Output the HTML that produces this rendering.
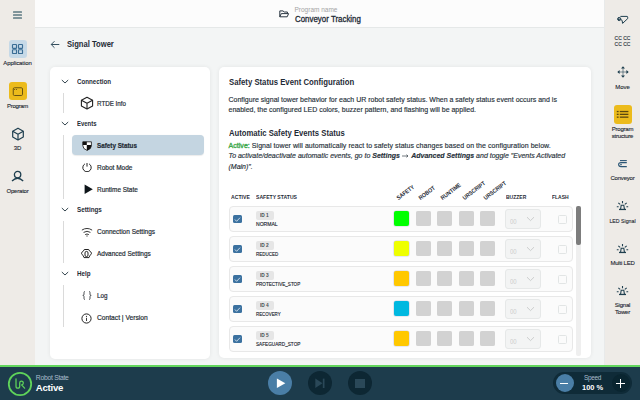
<!DOCTYPE html>
<html><head><meta charset="utf-8">
<style>
*{box-sizing:border-box;margin:0;padding:0}
html,body{width:640px;height:400px;overflow:hidden}
body{position:relative;background:#f3f5f5;font-family:"Liberation Sans",sans-serif;color:#1f2b36}
.a{position:absolute}
.t{position:absolute;white-space:nowrap;line-height:1}
.sb{position:absolute;top:0;width:35px;height:365px;background:#eeebe7}
.lbl{position:absolute;width:35px;text-align:center;font-size:6px;line-height:1;color:#1c2731;-webkit-text-stroke:0.12px #1c2731;white-space:nowrap}
.card{position:absolute;background:#fff;border-radius:5px;box-shadow:0 0 4px rgba(0,0,0,0.07)}
.hd{position:absolute;transform-origin:0 0;left:77px;font-size:7px;font-weight:bold;line-height:1;color:#1f2b36;white-space:nowrap}
.it{position:absolute;transform-origin:0 0;left:97.3px;font-size:7px;line-height:1;color:#252d35;white-space:nowrap;-webkit-text-stroke:0.2px #252d35}
.vl{position:absolute;left:63px;width:1px;background:#dadada}
.chev{position:absolute;left:61px}
.ic{position:absolute}
.row{position:absolute;left:228.5px;width:344px;height:25.5px;border:1px solid #e8e8e8;border-radius:4px;background:#fbfbfb}
.cb{position:absolute;left:3.7px;top:7.7px;width:8.6px;height:8.6px;border-radius:1.5px;background:#3c72a0}
.cb svg{position:absolute;left:0;top:0}
.idb{position:absolute;left:26.5px;top:4px;width:17.5px;height:9px;border-radius:2px;background:#e6e6e6}
.idb span{position:absolute;left:3.5px;top:2px;font-size:5.2px;font-weight:bold;line-height:1;color:#4a4f54;white-space:nowrap;transform:scaleX(0.92);transform-origin:0 0}
.nm{position:absolute;left:26.3px;top:15.2px;font-size:5.7px;line-height:1;color:#1a242e;-webkit-text-stroke:0.15px #1a242e;white-space:nowrap;transform:scaleX(0.86);transform-origin:0 0}
.sq{position:absolute;top:4.1px;width:15px;height:15px;border-radius:2px;background:#d2d2d2;box-shadow:0 0 0.6px rgba(0,0,0,0.12)}
.sq.c{box-shadow:0 0 0 0.6px #d6d6e4}
.sel{position:absolute;left:275.5px;top:2px;width:35.5px;height:19.5px;border:1px solid #e6e8e8;border-radius:3px;background:#f3f4f4}
.sel span{position:absolute;left:3.6px;top:9.2px;font-size:6.6px;line-height:1;color:#cdcdcd;transform:scaleX(0.9);transform-origin:0 0}
.sel svg{position:absolute;left:20.4px;top:5.7px}
.fl{position:absolute;left:328.8px;top:7.5px;width:8.6px;height:9px;border:1px solid #e2e5e5;border-radius:1.5px;background:#fbfbfb}
.th{position:absolute;transform-origin:0 0;top:194.3px;font-size:6px;font-weight:bold;line-height:1;color:#1f2b36;white-space:nowrap}
.rh{position:absolute;font-size:6px;font-weight:bold;line-height:1;color:#1f2b36;white-space:nowrap;transform-origin:0 100%;transform:rotate(-37deg) scaleX(0.87)}
</style></head><body>

<!-- left sidebar -->
<div class="sb" style="left:0">
  <div class="a" style="left:13px;top:11px;width:9px;height:2px;background:#80959b;border-radius:0.5px"></div>
  <div class="a" style="left:13px;top:14px;width:9px;height:2px;background:#80959b;border-radius:0.5px"></div>
  <div class="a" style="left:13px;top:17px;width:9px;height:2px;background:#80959b;border-radius:0.5px"></div>

  <div class="a" style="left:8.5px;top:40px;width:18px;height:18px;border-radius:3px;background:#c6d9e7"></div>
  <svg class="a" style="left:11px;top:43px" width="13" height="13" viewBox="0 0 13 13">
    <g fill="none" stroke="#3a6d95" stroke-width="1.15">
      <rect x="1.5" y="1.5" width="4" height="3.8" rx="0.6"/><rect x="7.5" y="1.5" width="4" height="3.8" rx="0.6"/>
      <rect x="1.5" y="6.7" width="4" height="3.8" rx="0.6"/><rect x="7.5" y="6.7" width="4" height="3.8" rx="0.6"/>
    </g>
  </svg>
  <div class="lbl" style="left:0;top:60px;letter-spacing:-0.1px">Application</div>

  <div class="a" style="left:8.5px;top:82px;width:18px;height:18px;border-radius:3px;background:#ecbb1c"></div>
  <svg class="a" style="left:11px;top:85px" width="13" height="13" viewBox="0 0 13 13">
    <rect x="2.25" y="2.75" width="9.25" height="7.75" rx="1.2" fill="none" stroke="#6a5412" stroke-width="1"/>
    <circle cx="3.6" cy="4.5" r="0.6" fill="#6a5412"/><circle cx="5.5" cy="4.5" r="0.6" fill="#6a5412"/>
  </svg>
  <div class="lbl" style="left:0;top:103px;letter-spacing:-0.3px">Program</div>

  <svg class="a" style="left:11px;top:127px" width="14" height="14" viewBox="0 0 14 14">
    <g fill="none" stroke="#1f3f4f" stroke-width="1.2" stroke-linejoin="round">
      <path d="M7 1.2 L12.3 4.2 V10 L7 13 L1.7 10 V4.2 Z"/><path d="M1.7 4.2 L7 7.2 L12.3 4.2 M7 7.2 V13"/>
    </g>
  </svg>
  <div class="lbl" style="left:0;top:145px">3D</div>

  <svg class="a" style="left:11px;top:170px" width="13" height="13" viewBox="0 0 13 13">
    <g fill="none" stroke="#1f3f4f" stroke-width="1.3">
      <circle cx="6.6" cy="4.6" r="3.2"/><path d="M1 11 Q6.6 5.4 12.2 11"/>
    </g>
  </svg>
  <div class="lbl" style="left:0;top:188px;letter-spacing:-0.2px">Operator</div>
</div>

<!-- header -->
<div class="a" style="left:35px;top:0;width:570px;height:28px;background:#fcfcfc;border-bottom:1px solid #e5e8e8"></div>
<svg class="a" style="left:279px;top:9.5px" width="11" height="9" viewBox="0 0 11 9">
  <path d="M0.8 0.9 H4 L5.2 2 H8.4 V3.6 M0.8 0.9 V6.8 H8.2 L9.6 3.6 H2.3 L0.8 6.8" fill="none" stroke="#2a3540" stroke-width="1" stroke-linejoin="round"/>
</svg>
<div class="t" style="left:294.5px;top:6.6px;font-size:6.5px;color:#a4a4a4">Program name</div>
<div class="t" style="left:294.5px;top:14.5px;font-size:8.5px;color:#1f2b36;-webkit-text-stroke:0.3px #1f2b36;transform:scaleX(0.93);transform-origin:0 0">Conveyor Tracking</div>

<!-- right sidebar -->
<div class="sb" style="left:605px"></div>
<div class="a" style="left:604px;top:0;width:1px;height:365px;background:#e8eaea"></div>

<!-- title -->
<svg class="a" style="left:50px;top:40px" width="10" height="9" viewBox="0 0 10 9">
  <path d="M9.3 4.5 H1.2 M4.5 1.2 L1.2 4.5 L4.5 7.8" fill="none" stroke="#35505f" stroke-width="1"/>
</svg>
<div class="t" style="left:67px;top:39.5px;font-size:8.5px;font-weight:bold;color:#1f2b36;transform:scaleX(0.896);transform-origin:0 0">Signal Tower</div>

<!-- left card -->
<div class="card" style="left:49.5px;top:66.5px;width:160px;height:292px"></div>
<svg class="chev" style="top:79px" width="8" height="5" viewBox="0 0 8 5"><path d="M0.8 1 L4 4 L7.2 1" fill="none" stroke="#34454f" stroke-width="1"/></svg>
<div class="hd" style="top:78px;transform:scaleX(0.883)">Connection</div>
<div class="vl" style="top:93px;height:20px"></div>
<div class="it" style="top:99.8px;transform:scaleX(0.89)">RTDE Info</div>

<svg class="chev" style="top:121px" width="8" height="5" viewBox="0 0 8 5"><path d="M0.8 1 L4 4 L7.2 1" fill="none" stroke="#34454f" stroke-width="1"/></svg>
<div class="hd" style="top:120px;transform:scaleX(0.85)">Events</div>
<div class="vl" style="top:135px;height:64px"></div>
<div class="a" style="left:72.2px;top:135.2px;width:132.3px;height:19.6px;border-radius:4px;background:#c4d5e1;box-shadow:0 0.6px 1px rgba(0,0,0,0.08)"></div>
<div class="it" style="top:142px;font-weight:bold;color:#1f2b36;transform:scaleX(0.9)">Safety Status</div>
<div class="it" style="top:164px;transform:scaleX(0.93)">Robot Mode</div>
<div class="it" style="top:186px;transform:scaleX(0.92)">Runtime State</div>

<svg class="chev" style="top:207px" width="8" height="5" viewBox="0 0 8 5"><path d="M0.8 1 L4 4 L7.2 1" fill="none" stroke="#34454f" stroke-width="1"/></svg>
<div class="hd" style="top:206px;transform:scaleX(0.9)">Settings</div>
<div class="vl" style="top:221px;height:42px"></div>
<div class="it" style="top:228px;transform:scaleX(0.927)">Connection Settings</div>
<div class="it" style="top:250px;transform:scaleX(0.921)">Advanced Settings</div>

<svg class="chev" style="top:271px" width="8" height="5" viewBox="0 0 8 5"><path d="M0.8 1 L4 4 L7.2 1" fill="none" stroke="#34454f" stroke-width="1"/></svg>
<div class="hd" style="top:270px;transform:scaleX(0.89)">Help</div>
<div class="vl" style="top:285px;height:42px"></div>
<div class="it" style="top:292px;transform:scaleX(0.9)">Log</div>
<div class="it" style="top:314px;transform:scaleX(0.953)">Contact | Version</div>

<!-- tree icons -->
<svg class="ic" style="left:80px;top:96px" width="14" height="14" viewBox="0 0 14 14">
  <g fill="none" stroke="#222" stroke-width="1.1" stroke-linejoin="round">
    <path d="M7 1.2 L12.6 4.2 V10 L7 13 L1.4 10 V4.2 Z"/><path d="M1.4 4.2 L7 7.2 L12.6 4.2 M7 7.2 V13"/>
  </g>
</svg>
<svg class="ic" style="left:82px;top:140.5px" width="10" height="10" viewBox="0 0 10 10">
  <path d="M0.8 0.8 H9.4 V4.6 Q9.4 8 5.1 9.4 Q0.8 8 0.8 4.6 Z" fill="#fff" stroke="#111" stroke-width="0.8"/>
  <path d="M0.8 0.8 H4.8 V4.1 H0.8 Z M4.8 4.1 H9.4 V4.6 Q9.4 8 5.1 9.4 H4.8 Z" fill="#111"/>
</svg>
<svg class="ic" style="left:82px;top:162px" width="10" height="10" viewBox="0 0 10 10">
  <g fill="none" stroke="#222" stroke-width="1">
    <path d="M2.9 1.9 A4.2 4.2 0 1 0 7.1 1.9"/><path d="M5 1 V4.6"/>
  </g>
</svg>
<svg class="ic" style="left:83.5px;top:184px" width="10" height="11" viewBox="0 0 10 11">
  <path d="M0.6 0.5 L8.8 5.2 L0.6 9.9 Z" fill="#0d1419"/>
</svg>
<svg class="ic" style="left:81px;top:226.5px" width="12" height="10" viewBox="0 0 12 10">
  <g fill="none" stroke="#222" stroke-width="0.9" stroke-linecap="round">
    <path d="M1.2 2.9 Q6 -0.2 10.8 2.9"/><path d="M2.9 5.2 Q6 3.1 9.1 5.2"/><path d="M4.5 7.4 Q6 6.4 7.5 7.4"/>
  </g>
  <circle cx="6" cy="9" r="0.7" fill="#555"/>
</svg>
<svg class="ic" style="left:81px;top:248px" width="11" height="11" viewBox="0 0 11 11">
  <g fill="none" stroke="#222" stroke-width="1">
    <path d="M3.3 1.5 H7.7 L8.6 3.1 L10.2 4.3 Q10.7 5.3 10.2 6.3 L8.8 7.5 L8 9.6 H3 L2.2 7.5 L0.8 6.3 Q0.3 5.3 0.8 4.3 L2.4 3.1 Z"/>
    <rect x="4" y="3.4" width="3" height="5.2" rx="1.5"/>
  </g>
</svg>
<svg class="ic" style="left:82px;top:291px" width="10" height="9" viewBox="0 0 10 9">
  <g fill="none" stroke="#3a3f44" stroke-width="0.9">
    <path d="M3 0.5 Q2 0.5 2 1.5 V3.3 Q2 4.3 0.8 4.4 Q2 4.5 2 5.5 V7.5 Q2 8.5 3 8.5"/>
    <path d="M7 0.5 Q8 0.5 8 1.5 V3.3 Q8 4.3 9.2 4.4 Q8 4.5 8 5.5 V7.5 Q8 8.5 7 8.5"/>
  </g>
</svg>
<svg class="ic" style="left:81px;top:312.5px" width="11" height="11" viewBox="0 0 11 11">
  <g fill="none" stroke="#222" stroke-width="1">
    <circle cx="5.5" cy="5.5" r="4.6"/><path d="M5.5 4.8 V8" stroke-width="0.9"/>
  </g>
  <circle cx="5.5" cy="3.3" r="0.6" fill="#222"/>
</svg>

<!-- right sidebar icons -->
<svg class="ic" style="left:616px;top:15px" width="13" height="10" viewBox="0 0 13 10">
  <g fill="none" stroke="#1f3f4f" stroke-width="1" stroke-linejoin="round">
    <path d="M4.4 1.4 H11 Q11.7 1.4 11.7 2.2 V3.6 L6.6 8.4 L6.1 5.4 L4.8 4.5"/>
    <circle cx="3.2" cy="4" r="1.6"/>
  </g>
  <circle cx="2.9" cy="4.2" r="1" fill="#1f3f4f"/>
</svg>
<div class="lbl" style="left:605px;top:34.5px;font-size:5px;line-height:6.8px;color:#2a3540">CC CC<br>CC CC</div>
<svg class="ic" style="left:616.5px;top:65.7px" width="12" height="12" viewBox="0 0 12 12">
  <g fill="none" stroke="#1f3f4f" stroke-width="0.7" opacity="0.8">
    <path d="M6 1 V11 M1 6 H11"/>
  </g>
  <g fill="#1f3f4f">
    <path d="M6 0.3 L8 2.6 H4 Z M6 11.7 L8 9.4 H4 Z M0.3 6 L2.6 4 V8 Z M11.7 6 L9.4 4 V8 Z"/>
  </g>
</svg>
<div class="lbl" style="left:605px;top:83.5px">Move</div>
<div class="a" style="left:613.5px;top:105px;width:18.5px;height:18.5px;border-radius:3px;background:#ecbb1c"></div>
<svg class="ic" style="left:616px;top:110px" width="13" height="10" viewBox="0 0 13 10">
  <g fill="#5a4710">
    <rect x="0.8" y="0.9" width="1.8" height="1.3"/><rect x="3.8" y="0.9" width="8.6" height="1.3"/>
    <rect x="0.8" y="3.7" width="1.8" height="1.3"/><rect x="3.8" y="3.7" width="8.6" height="1.3"/>
    <rect x="0.8" y="6.5" width="1.8" height="1.3"/><rect x="3.8" y="6.5" width="8.6" height="1.3"/>
  </g>
</svg>
<div class="lbl" style="left:605px;top:126.3px;line-height:6.2px;letter-spacing:-0.2px">Program<br>structure</div>
<svg class="ic" style="left:617px;top:158px" width="11" height="11" viewBox="0 0 11 11">
  <g fill="none" stroke="#2a5575" stroke-width="1.1">
    <path d="M3 2.6 H9.8"/><path d="M9.8 4.6 H4 Q1.6 4.6 1.6 6.6 Q1.6 8.6 4 8.6 H9.8"/>
  </g>
  <circle cx="4" cy="6.6" r="0.8" fill="#2a5575"/>
</svg>
<div class="lbl" style="left:605px;top:175px;letter-spacing:-0.2px">Conveyor</div>

<svg class="ic" style="left:616px;top:200px" width="13" height="11" viewBox="0 0 13 11">
  <g stroke="#1f3f4f" stroke-width="1.1" fill="none">
    <path d="M6.5 1 V3.3 M2.3 2.9 L4.2 4.4 M10.7 2.9 L8.8 4.4 M0.8 6.8 H2.6 M10.4 6.8 H12.2"/>
    <path d="M4.6 9 L5.2 5.2 H7.8 L8.4 9"/>
  </g>
  <rect x="3" y="8.8" width="7" height="1.3" fill="#1f3f4f"/>
</svg>
<div class="lbl" style="left:605px;top:217.7px;transform:scaleX(0.87)">LED Signal</div>
<svg class="ic" style="left:616px;top:243px" width="13" height="11" viewBox="0 0 13 11">
  <g stroke="#1f3f4f" stroke-width="1.1" fill="none">
    <path d="M6.5 1 V3.3 M2.3 2.9 L4.2 4.4 M10.7 2.9 L8.8 4.4 M0.8 6.8 H2.6 M10.4 6.8 H12.2"/>
    <path d="M4.6 9 L5.2 5.2 H7.8 L8.4 9"/>
  </g>
  <rect x="3" y="8.8" width="7" height="1.3" fill="#1f3f4f"/>
</svg>
<div class="lbl" style="left:605px;top:259.5px;letter-spacing:-0.2px">Multi LED</div>
<svg class="ic" style="left:616px;top:285px" width="13" height="11" viewBox="0 0 13 11">
  <g stroke="#1f3f4f" stroke-width="1.1" fill="none">
    <path d="M6.5 1 V3.3 M2.3 2.9 L4.2 4.4 M10.7 2.9 L8.8 4.4 M0.8 6.8 H2.6 M10.4 6.8 H12.2"/>
    <path d="M4.6 9 L5.2 5.2 H7.8 L8.4 9"/>
  </g>
  <rect x="3" y="8.8" width="7" height="1.3" fill="#1f3f4f"/>
</svg>
<div class="lbl" style="left:605px;top:301.5px;line-height:7px;letter-spacing:-0.2px">Signal<br>Tower</div>

<!-- right card -->
<div class="card" style="left:218.5px;top:66.5px;width:372px;height:291.5px"></div>
<div class="t" style="left:228.8px;top:78.2px;font-size:9px;font-weight:bold;transform:scaleX(0.86);transform-origin:0 0">Safety Status Event Configuration</div>
<div class="t" style="left:228.5px;top:96px;font-size:7px;color:#27313a;-webkit-text-stroke:0.15px #27313a">Configure signal tower behavior for each UR robot safety status. When a safety status event occurs and is</div>
<div class="t" style="left:228.5px;top:106px;font-size:7px;color:#27313a;-webkit-text-stroke:0.15px #27313a">enabled, the configured LED colors, buzzer pattern, and flashing will be applied.</div>
<div class="t" style="left:228.8px;top:128.5px;font-size:9px;font-weight:bold;transform:scaleX(0.854);transform-origin:0 0">Automatic Safety Events Status</div>
<div class="t" style="left:228.5px;top:142px;font-size:7px;color:#27313a;-webkit-text-stroke:0.15px #27313a;letter-spacing:0.05px"><span style="color:#3ea94a;-webkit-text-stroke:0.35px #3ea94a">Active:</span> Signal tower will automatically react to safety status changes based on the configuration below.</div>
<div class="t" style="left:228.5px;top:152.3px;font-size:7px;color:#27313a;-webkit-text-stroke:0.15px #27313a;font-style:italic">To activate/deactivate automatic events, go to <b>Settings <svg width="6.5" height="4" viewBox="0 0 6.5 4" style="vertical-align:0;margin:0 0.6px"><path d="M0 2H6M4.4 0.7L6 2L4.4 3.3" stroke="#27313a" stroke-width="0.65" fill="none"/></svg> Advanced Settings</b> and toggle "Events Activated</div>
<div class="t" style="left:228.5px;top:162.6px;font-size:7px;color:#27313a;-webkit-text-stroke:0.15px #27313a;font-style:italic">(Main)".</div>

<!-- table header -->
<div class="th" style="left:230.5px;transform:scaleX(0.855)">ACTIVE</div>
<div class="th" style="left:255.7px;transform:scaleX(0.847)">SAFETY STATUS</div>
<div class="th" style="left:505.9px;transform:scaleX(0.834)">BUZZER</div>
<div class="th" style="left:552.2px;transform:scaleX(0.835)">FLASH</div>
<div class="rh" style="left:398.9px;top:195.4px">SAFETY</div>
<div class="rh" style="left:420.7px;top:195.4px">ROBOT</div>
<div class="rh" style="left:442.6px;top:195.4px">RUNTIME</div>
<div class="rh" style="left:464.5px;top:195px">URSCRIPT</div>
<div class="rh" style="left:486px;top:195px">URSCRIPT</div>

<!-- rows -->
<div class="row" style="top:206.2px">
  <div class="cb"><svg width="9" height="9" viewBox="0 0 9 9"><path d="M1.9 4.5 L3.6 6.3 L7 2.7" fill="none" stroke="#e9f0f5" stroke-width="0.8"/></svg></div>
  <div class="idb"><span>ID 1</span></div><div class="nm" style="transform:scaleX(0.89)">NORMAL</div>
  <div class="sq c" style="left:164.6px;background:#00ff00"></div><div class="sq" style="left:186.3px"></div><div class="sq" style="left:207.8px"></div><div class="sq" style="left:229.3px"></div><div class="sq" style="left:250.8px"></div>
  <div class="sel"><span>00</span><svg width="9" height="6" viewBox="0 0 9 6"><path d="M1 1.2 L4.5 4.6 L8 1.2" fill="none" stroke="#c6c8c8" stroke-width="0.9"/></svg></div>
  <div class="fl"></div>
</div>
<div class="row" style="top:236.2px">
  <div class="cb"><svg width="9" height="9" viewBox="0 0 9 9"><path d="M1.9 4.5 L3.6 6.3 L7 2.7" fill="none" stroke="#e9f0f5" stroke-width="0.8"/></svg></div>
  <div class="idb"><span>ID 2</span></div><div class="nm" style="transform:scaleX(0.79)">REDUCED</div>
  <div class="sq c" style="left:164.6px;background:#eeff00"></div><div class="sq" style="left:186.3px"></div><div class="sq" style="left:207.8px"></div><div class="sq" style="left:229.3px"></div><div class="sq" style="left:250.8px"></div>
  <div class="sel"><span>00</span><svg width="9" height="6" viewBox="0 0 9 6"><path d="M1 1.2 L4.5 4.6 L8 1.2" fill="none" stroke="#c6c8c8" stroke-width="0.9"/></svg></div>
  <div class="fl"></div>
</div>
<div class="row" style="top:266.2px">
  <div class="cb"><svg width="9" height="9" viewBox="0 0 9 9"><path d="M1.9 4.5 L3.6 6.3 L7 2.7" fill="none" stroke="#e9f0f5" stroke-width="0.8"/></svg></div>
  <div class="idb"><span>ID 3</span></div><div class="nm" style="transform:scaleX(0.806)">PROTECTIVE_STOP</div>
  <div class="sq c" style="left:164.6px;background:#ffc800"></div><div class="sq" style="left:186.3px"></div><div class="sq" style="left:207.8px"></div><div class="sq" style="left:229.3px"></div><div class="sq" style="left:250.8px"></div>
  <div class="sel"><span>00</span><svg width="9" height="6" viewBox="0 0 9 6"><path d="M1 1.2 L4.5 4.6 L8 1.2" fill="none" stroke="#c6c8c8" stroke-width="0.9"/></svg></div>
  <div class="fl"></div>
</div>
<div class="row" style="top:296.2px">
  <div class="cb"><svg width="9" height="9" viewBox="0 0 9 9"><path d="M1.9 4.5 L3.6 6.3 L7 2.7" fill="none" stroke="#e9f0f5" stroke-width="0.8"/></svg></div>
  <div class="idb"><span>ID 4</span></div><div class="nm" style="transform:scaleX(0.774)">RECOVERY</div>
  <div class="sq c" style="left:164.6px;background:#00b8e0"></div><div class="sq" style="left:186.3px"></div><div class="sq" style="left:207.8px"></div><div class="sq" style="left:229.3px"></div><div class="sq" style="left:250.8px"></div>
  <div class="sel"><span>00</span><svg width="9" height="6" viewBox="0 0 9 6"><path d="M1 1.2 L4.5 4.6 L8 1.2" fill="none" stroke="#c6c8c8" stroke-width="0.9"/></svg></div>
  <div class="fl"></div>
</div>
<div class="row" style="top:326.2px">
  <div class="cb"><svg width="9" height="9" viewBox="0 0 9 9"><path d="M1.9 4.5 L3.6 6.3 L7 2.7" fill="none" stroke="#e9f0f5" stroke-width="0.8"/></svg></div>
  <div class="idb"><span>ID 5</span></div><div class="nm" style="transform:scaleX(0.823)">SAFEGUARD_STOP</div>
  <div class="sq c" style="left:164.6px;background:#ffc800"></div><div class="sq" style="left:186.3px"></div><div class="sq" style="left:207.8px"></div><div class="sq" style="left:229.3px"></div><div class="sq" style="left:250.8px"></div>
  <div class="sel"><span>00</span><svg width="9" height="6" viewBox="0 0 9 6"><path d="M1 1.2 L4.5 4.6 L8 1.2" fill="none" stroke="#c6c8c8" stroke-width="0.9"/></svg></div>
  <div class="fl"></div>
</div>

<!-- scrollbar -->
<div class="a" style="left:576.2px;top:205.8px;width:4.4px;height:150px;border-radius:2px;background:#efefef"></div>
<div class="a" style="left:576.2px;top:205.8px;width:4.4px;height:39.5px;border-radius:2px;background:#7d7d7d"></div>

<!-- bottom bar -->
<div class="a" style="left:0;top:365px;width:640px;height:2px;background:#62d65d"></div>
<div class="a" style="left:0;top:367px;width:640px;height:33px;background:#1d3c4c"></div>
<svg class="ic" style="left:7px;top:370.5px" width="26" height="26" viewBox="0 0 26 26">
  <circle cx="13" cy="13" r="11.2" fill="none" stroke="#5fd35a" stroke-width="1.8"/>
  <path d="M9 7.8 V15.2 Q9 17.2 10.85 17.2 Q12.7 17.2 12.7 15.2 V12 Q12.7 10.2 14.4 10.2 Q16.3 10.2 16.3 12.1 Q16.3 13.9 14.6 13.9 L17.6 17.2" fill="none" stroke="#5fd35a" stroke-width="1.25" stroke-linejoin="round" stroke-linecap="round"/>
</svg>
<div class="t" style="left:35.8px;top:375.3px;font-size:6.8px;color:#a9bccb;letter-spacing:-0.28px">Robot State</div>
<div class="t" style="left:35.8px;top:382.5px;font-size:9.6px;font-weight:bold;color:#fff;letter-spacing:-0.26px">Active</div>

<div class="a" style="left:268px;top:371.3px;width:24px;height:24px;border-radius:50%;background:#4a7ea6"></div>
<svg class="ic" style="left:276px;top:378px" width="10" height="11" viewBox="0 0 10 11"><path d="M0.9 0.6 L9.3 5.3 L0.9 10 Z" fill="#fff"/></svg>
<div class="a" style="left:308px;top:371.3px;width:24px;height:24px;border-radius:50%;background:#0d2733"></div>
<svg class="ic" style="left:315px;top:378px" width="10" height="11" viewBox="0 0 10 11"><path d="M0.3 0.6 L7.5 5.3 L0.3 10 Z" fill="#2a4858"/><rect x="7.8" y="0.6" width="1.7" height="9.4" fill="#2a4858"/></svg>
<div class="a" style="left:348px;top:371.3px;width:24px;height:24px;border-radius:50%;background:#0d2733"></div>
<div class="a" style="left:355px;top:378.6px;width:9.6px;height:9.4px;background:#2a4858"></div>

<div class="a" style="left:553.2px;top:372.2px;width:78.6px;height:22.2px;border-radius:11.1px;background:#0f2b38"></div>
<div class="a" style="left:555.5px;top:374.3px;width:18px;height:18px;border-radius:50%;background:#4a7ea6"></div>
<div class="a" style="left:560.3px;top:382.5px;width:8.2px;height:1.4px;background:#fff"></div>
<div class="a" style="left:611.8px;top:374.3px;width:18px;height:18px;border-radius:50%;background:#0a2530"></div>
<div class="a" style="left:616px;top:382.6px;width:9.2px;height:1.2px;background:#fff"></div>
<div class="a" style="left:620px;top:378.6px;width:1.2px;height:9.2px;background:#fff"></div>
<div class="t" style="left:583.9px;top:375px;font-size:6.5px;color:#a9bccb;letter-spacing:-0.3px">Speed</div>
<div class="t" style="left:582.1px;top:384px;font-size:8px;font-weight:bold;color:#fff;transform:scaleX(0.934);transform-origin:0 0">100 %</div>

</body></html>
